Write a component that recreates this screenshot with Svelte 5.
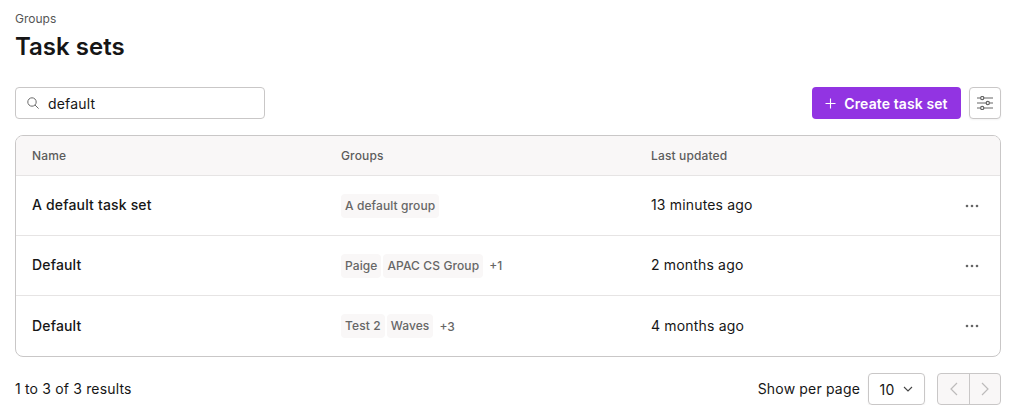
<script>
    let rows = [
        { name: "A default task set", groups: ["A default group"], more: "", updated: "13 minutes ago" },
        { name: "Default", groups: ["Paige", "APAC CS Group"], more: "+1", updated: "2 months ago" },
        { name: "Default", groups: ["Test 2", "Waves"], more: "+3", updated: "4 months ago" }
    ];
</script>

<div class="page">
    <div class="crumb">Groups</div>
    <h1>Task sets</h1>

    <div class="toolbar">
        <div class="search">
            <svg width="12" height="12" viewBox="0 0 12 12" fill="none" stroke="#6b6b6b" stroke-width="1">
                <circle cx="5" cy="5" r="4.2" />
                <path d="M8 8l3.6 3.6" />
            </svg>
            <span>default</span>
        </div>
        <div class="actions">
            <button class="create">
                <svg width="11" height="11" viewBox="0 0 11 11" fill="none" stroke="#fff" stroke-width="1.1">
                    <path d="M5.5 0.5v10M0.5 5.5h10" />
                </svg>
                Create task set
            </button>
            <button class="filter" aria-label="Filters">
                <svg width="16" height="14" viewBox="0 0 16 14" fill="none" stroke="#666" stroke-width="1.2">
                    <path d="M0 2h3.6M6.8 2h9.2M0 7h9.2M12.4 7H16M0 12h3.6M6.8 12h9.2" />
                    <circle cx="5.2" cy="2" r="1.6" />
                    <circle cx="10.8" cy="7" r="1.6" />
                    <circle cx="5.2" cy="12" r="1.6" />
                </svg>
            </button>
        </div>
    </div>

    <div class="table">
        <div class="row head">
            <div>Name</div>
            <div>Groups</div>
            <div>Last updated</div>
        </div>
        {#each rows as r}
            <div class="row">
                <div class="name">{r.name}</div>
                <div class="groups">
                    {#each r.groups as g}
                        <span class="tag">{g}</span>
                    {/each}
                    {#if r.more}
                        <span class="more">{r.more}</span>
                    {/if}
                </div>
                <div class="updated">{r.updated}</div>
                <div class="dots">
                    <svg width="14" height="4" viewBox="0 0 14 4" fill="#666">
                        <circle cx="2" cy="2" r="1.3" />
                        <circle cx="7" cy="2" r="1.3" />
                        <circle cx="12" cy="2" r="1.3" />
                    </svg>
                </div>
            </div>
        {/each}
    </div>

    <div class="footer">
        <div class="label">1 to 3 of 3 results</div>
        <div class="paging">
            <span class="label">Show per page</span>
            <div class="select">
                10
                <svg width="10" height="6" viewBox="0 0 10 6" fill="none" stroke="#444" stroke-width="1.1">
                    <path d="M1 1l4 4 4-4" />
                </svg>
            </div>
            <div class="pager">
                <div class="pg">
                    <svg width="9" height="14" viewBox="0 0 9 14" fill="none" stroke="#bdbbbb" stroke-width="1.2">
                        <path d="M8 1L2 7l6 6" />
                    </svg>
                </div>
                <div class="pg">
                    <svg width="9" height="14" viewBox="0 0 9 14" fill="none" stroke="#bdbbbb" stroke-width="1.2">
                        <path d="M1 1l6 6-6 6" />
                    </svg>
                </div>
            </div>
        </div>
    </div>
</div>

<style>
    :global(body) {
        background: #fff;
    }
    .page {
        padding: 11px 19px 0 15px;
        font-family: Inter, sans-serif;
        color: #161616;
        letter-spacing: 0.17px;
    }
    .crumb {
        font-size: 12px;
        line-height: 16px;
        color: #555;
        letter-spacing: 0;
    }
    h1 {
        margin: 4px 0 0;
        font-size: 24px;
        line-height: 32px;
        font-weight: 600;
        letter-spacing: 0;
    }
    .toolbar {
        margin-top: 24px;
        display: flex;
        justify-content: space-between;
        align-items: center;
    }
    .search {
        width: 250px;
        height: 32px;
        box-sizing: border-box;
        border: 1px solid #c9c7c7;
        border-radius: 4px;
        display: flex;
        align-items: center;
        gap: 9px;
        padding-left: 11px;
        font-size: 14px;
    }
    .actions {
        display: flex;
        gap: 8px;
    }
    button {
        font-family: inherit;
        border: none;
        cursor: pointer;
    }
    .create {
        width: 149px;
        height: 32px;
        border-radius: 4px;
        background: #9234e2;
        color: #fff;
        font-size: 14px;
        font-weight: 600;
        letter-spacing: 0.1px;
        display: flex;
        align-items: center;
        justify-content: center;
        gap: 8px;
        padding: 0;
    }
    .filter {
        width: 32px;
        height: 32px;
        background: #fff;
        border: 1px solid #c9c7c7;
        border-radius: 4px;
        box-shadow: 0 1px 2px rgba(0, 0, 0, 0.05);
        display: flex;
        align-items: center;
        justify-content: center;
        padding: 0;
    }
    .table {
        margin-top: 16px;
        border: 1px solid #c9c7c7;
        border-radius: 8px;
        overflow: hidden;
    }
    .row {
        display: grid;
        grid-template-columns: 309px 310px 1fr 35px;
        align-items: center;
        height: 60px;
        box-sizing: border-box;
        padding-left: 16px;
        border-bottom: 1px solid #e6e4e4;
        font-size: 14px;
    }
    .row:last-child {
        border-bottom: none;
    }
    .row.head {
        height: 40px;
        background: #f9f7f7;
        font-size: 12px;
        font-weight: 500;
        color: #5c5c5c;
        letter-spacing: 0.14px;
    }
    .name {
        font-weight: 500;
        padding-bottom: 2px;
    }
    .updated,
    .label {
        padding-bottom: 2px;
    }
    .groups {
        display: flex;
        align-items: center;
        gap: 2px;
    }
    .tag {
        background: #f9f7f7;
        border-radius: 4px;
        padding: 0 4px;
        line-height: 24px;
        font-size: 12px;
        font-weight: 500;
        color: #666;
        letter-spacing: 0.1px;
    }
    .more {
        margin-left: 4px;
        font-size: 12px;
        font-weight: 500;
        color: #666;
        letter-spacing: 0;
    }
    .dots {
        display: flex;
    }
    .footer {
        margin-top: 16px;
        display: flex;
        justify-content: space-between;
        align-items: center;
        font-size: 14px;
    }
    .paging {
        display: flex;
        align-items: center;
    }
    .select {
        margin-left: 8px;
        width: 57px;
        height: 32px;
        box-sizing: border-box;
        border: 1px solid #c9c7c7;
        border-radius: 4px;
        box-shadow: 0 1px 2px rgba(0, 0, 0, 0.05);
        display: flex;
        align-items: center;
        justify-content: center;
        gap: 9px;
    }
    .pager {
        margin-left: 12px;
        display: flex;
        height: 32px;
        box-sizing: border-box;
        border: 1px solid #c9c7c7;
        border-radius: 4px;
        background: #f9f7f7;
    }
    .pg {
        width: 31px;
        box-sizing: border-box;
        display: flex;
        align-items: center;
        justify-content: center;
    }
    .pg + .pg {
        border-left: 1px solid #c9c7c7;
    }
</style>
